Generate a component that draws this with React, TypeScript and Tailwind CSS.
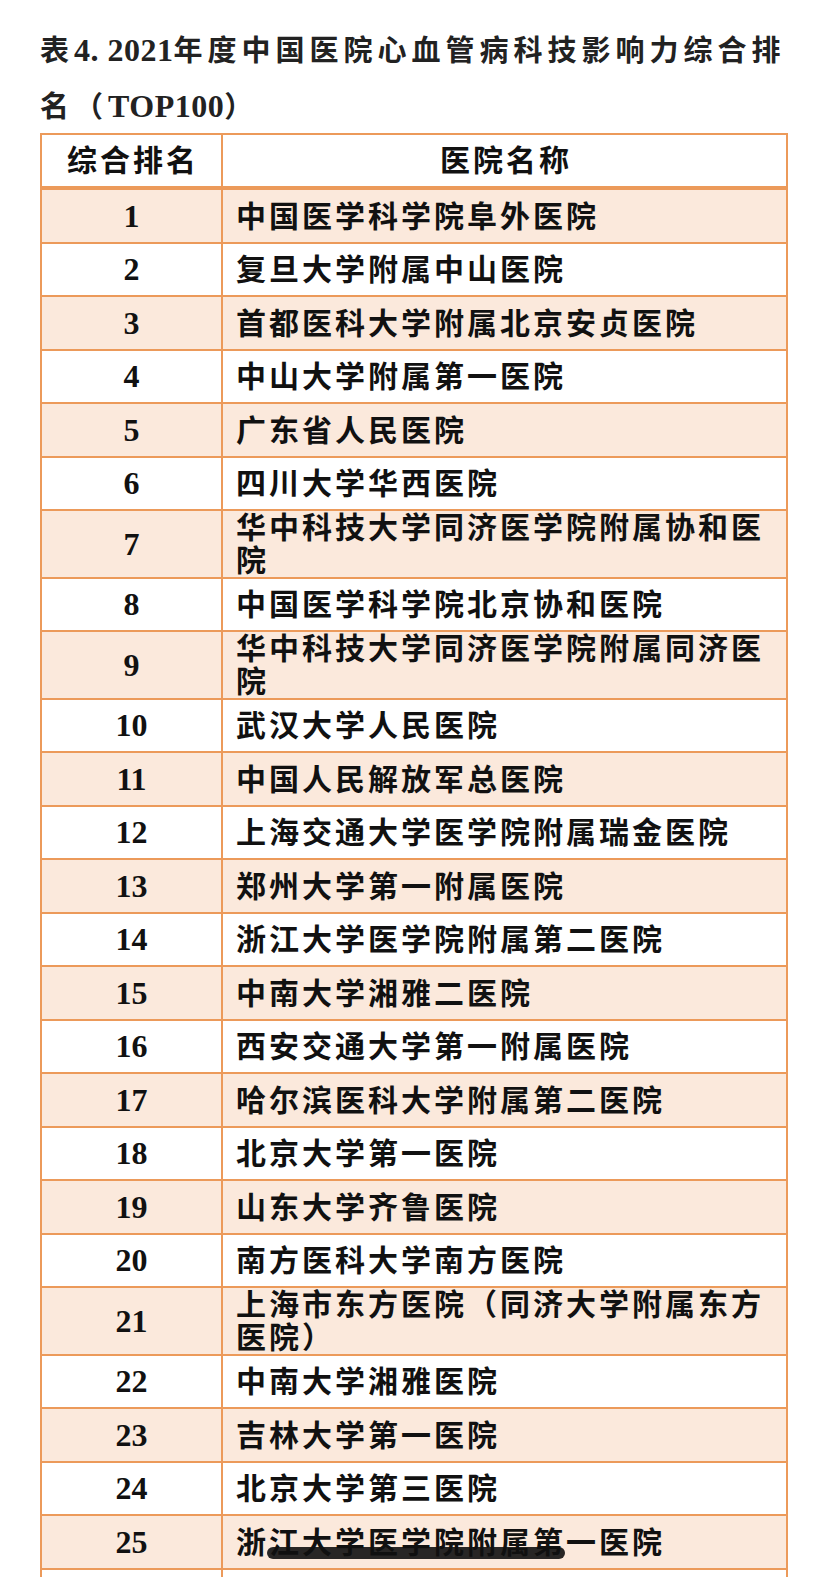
import React from "react";

const rows: string[] = [
  "中国医学科学院阜外医院",
  "复旦大学附属中山医院",
  "首都医科大学附属北京安贞医院",
  "中山大学附属第一医院",
  "广东省人民医院",
  "四川大学华西医院",
  "华中科技大学同济医学院附属协和医院",
  "中国医学科学院北京协和医院",
  "华中科技大学同济医学院附属同济医院",
  "武汉大学人民医院",
  "中国人民解放军总医院",
  "上海交通大学医学院附属瑞金医院",
  "郑州大学第一附属医院",
  "浙江大学医学院附属第二医院",
  "中南大学湘雅二医院",
  "西安交通大学第一附属医院",
  "哈尔滨医科大学附属第二医院",
  "北京大学第一医院",
  "山东大学齐鲁医院",
  "南方医科大学南方医院",
  "上海市东方医院（同济大学附属东方医院）",
  "中南大学湘雅医院",
  "吉林大学第一医院",
  "北京大学第三医院",
  "浙江大学医学院附属第一医院",
  "首都医科大学附属北京朝阳医院",
  "中国医科大学附属第一医院",
];

const cjk = "font-['Noto_Sans_CJK_SC',sans-serif]";
const serif = "font-['Liberation_Serif','Noto_Sans_CJK_SC',serif]";

export default function App() {
  return (
    <div className="relative h-[1577px] w-[828px] overflow-hidden bg-white">
      <div className="mx-[40px] w-[748px]">
        <h1
          className={`${cjk} pt-[21px] text-[29px] font-bold leading-[54px] tracking-[5px] text-[#222]`}
        >
          <span className="block whitespace-nowrap">
            表
            <span className={`${serif} text-[32px] font-bold tracking-[0.5px]`}>4.&nbsp;2021</span>
            年度中国医院心血管病科技影响力综合排
          </span>
          <span className="block whitespace-nowrap">
            名（<span className={`${serif} text-[32px] font-bold tracking-[0.5px]`}>TOP100</span>）
          </span>
        </h1>

        <div className="border-x-2 border-t-2 border-[#ec9a5a]">
          <div className="grid grid-cols-[181px_1fr] border-b-4 border-[#ec9a5a] bg-white">
            <div
              className={`${cjk} flex min-h-[51px] items-center justify-center border-r-2 border-[#ec9a5a] pl-[3px] text-[30px] font-bold leading-[33px] tracking-[3px] text-[#111]`}
            >
              <span className="-translate-y-[2px]">综合排名</span>
            </div>
            <div
              className={`${cjk} flex min-h-[51px] items-center justify-center pl-[3px] text-[30px] font-bold leading-[33px] tracking-[3px] text-[#111]`}
            >
              <span className="-translate-y-[2px]">医院名称</span>
            </div>
          </div>
          {rows.map((name, i) => (
            <div
              key={i}
              className={`grid grid-cols-[181px_1fr] border-b-2 border-[#ec9a5a] ${
                i % 2 === 0 ? "bg-[#fbe9dc]" : "bg-white"
              }`}
            >
              <div
                className={`${serif} flex items-center justify-center border-r-2 border-[#ec9a5a] text-[32px] font-bold leading-[33px] text-[#111] ${
                  i % 2 === 0 ? "min-h-[52px]" : "min-h-[51px]"
                }`}
              >
                {i + 1}
              </div>
              <div
                className={`${cjk} flex items-center pl-[13px] pr-[4px] text-[30px] font-bold leading-[33px] tracking-[3px] text-[#111] ${
                  i % 2 === 0 ? "min-h-[52px]" : "min-h-[51px]"
                }`}
              >
                <span className="-translate-y-[2px]">{name}</span>
              </div>
            </div>
          ))}
        </div>
      </div>
      <div className="absolute left-[267px] top-[1547px] h-[12px] w-[298px] rounded-full bg-[#111]/90" />
    </div>
  );
}
